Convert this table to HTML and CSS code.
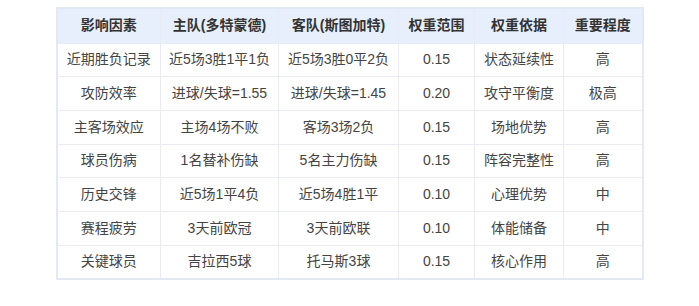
FILE: index.html
```html
<!DOCTYPE html>
<html lang="zh-CN">
<head>
    <meta charset="UTF-8">
    <title>影响因素权重</title>
    <link rel="stylesheet" href="styles.css">
</head>
<body>
<table class="factor-table">
    <colgroup>
        <col class="c1"><col class="c2"><col class="c3"><col class="c4"><col class="c5"><col class="c6">
    </colgroup>
    <thead>
    <tr>
        <th>影响因素</th>
        <th>主队(多特蒙德)</th>
        <th>客队(斯图加特)</th>
        <th>权重范围</th>
        <th>权重依据</th>
        <th>重要程度</th>
    </tr>
    </thead>
    <tbody>
    <tr><td>近期胜负记录</td><td>近5场3胜1平1负</td><td>近5场3胜0平2负</td><td>0.15</td><td>状态延续性</td><td>高</td></tr>
    <tr><td>攻防效率</td><td>进球/失球=1.55</td><td>进球/失球=1.45</td><td>0.20</td><td>攻守平衡度</td><td>极高</td></tr>
    <tr><td>主客场效应</td><td>主场4场不败</td><td>客场3场2负</td><td>0.15</td><td>场地优势</td><td>高</td></tr>
    <tr><td>球员伤病</td><td>1名替补伤缺</td><td>5名主力伤缺</td><td>0.15</td><td>阵容完整性</td><td>高</td></tr>
    <tr><td>历史交锋</td><td>近5场1平4负</td><td>近5场4胜1平</td><td>0.10</td><td>心理优势</td><td>中</td></tr>
    <tr><td>赛程疲劳</td><td>3天前欧冠</td><td>3天前欧联</td><td>0.10</td><td>体能储备</td><td>中</td></tr>
    <tr><td>关键球员</td><td>吉拉西5球</td><td>托马斯3球</td><td>0.15</td><td>核心作用</td><td>高</td></tr>
    </tbody>
</table>
</body>
</html>
```

FILE: styles.css
```css
body {
    margin: 0;
    padding: 7px 0;
    background: #fff;
    font-family: "Liberation Sans", Arial, "Noto Sans CJK SC", sans-serif;
    font-size: 14px;
    color: #444;
}
.factor-table {
    width: 586px;
    margin: 0 auto;
    border-collapse: collapse;
    border: 2px solid #e3e8f5;
    table-layout: fixed;
}
.c1 { width: 104px; }
.c2 { width: 118px; }
.c3 { width: 120px; }
.c4 { width: 76px; }
.c5 { width: 89px; }
.c6 { width: 79px; }
th, td {
    border: 1px solid #e8ebf4;
    text-align: center;
    padding: 0 4px;
    line-height: 17px;
    white-space: nowrap;
}
th {
    height: 33.5px;
    background-color: #e8effc;
    font-weight: bold;
    color: #333;
}
td {
    height: 32.7px;
}
```
